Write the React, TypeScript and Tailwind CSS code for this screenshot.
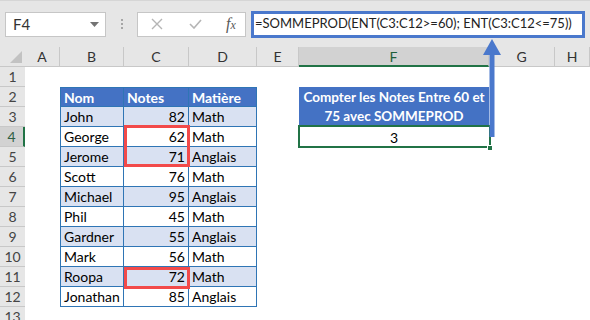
import React from "react";

const rows = [
  ["John", "82", "Math"],
  ["George", "62", "Math"],
  ["Jerome", "71", "Anglais"],
  ["Scott", "76", "Math"],
  ["Michael", "95", "Anglais"],
  ["Phil", "45", "Math"],
  ["Gardner", "55", "Anglais"],
  ["Mark", "56", "Math"],
  ["Roopa", "72", "Math"],
  ["Jonathan", "85", "Anglais"],
];

const letters = ["A", "B", "C", "D", "E", "F", "G", "H"];

function Toolbar() {
  return (
    <div className="h-[47px] bg-[#e6e6e6] border-t border-[#d6d6d6] flex items-center pl-[5px]">
      <div className="w-[101px] h-[25px] bg-white border border-[#c6c6c6] flex items-center justify-between pl-[7px] pr-[6px]">
        <span className="text-[15px] text-[#333]">F4</span>
        <svg width="9" height="5" viewBox="0 0 9 5">
          <path d="M0 0h9L4.5 5z" fill="#737373" />
        </svg>
      </div>
      <div className="w-[31px] flex flex-col items-center gap-[2px]">
        <span className="w-[2px] h-[2px] bg-[#a6a6a6]" />
        <span className="w-[2px] h-[2px] bg-[#a6a6a6]" />
        <span className="w-[2px] h-[2px] bg-[#a6a6a6]" />
      </div>
      <div className="w-[109px] h-[25px] bg-white border border-[#c6c6c6] flex items-center pl-[13px]">
        <svg width="12" height="12" viewBox="0 0 12 12">
          <path d="M1 1l10 10M11 1L1 11" stroke="#b5b5b5" strokeWidth="1.4" />
        </svg>
        <svg className="ml-[26px]" width="13" height="10" viewBox="0 0 13 10">
          <path d="M1 5l4 4L12 1" stroke="#b5b5b5" strokeWidth="1.6" fill="none" />
        </svg>
        <span className="ml-[24px] font-['Liberation_Serif'] italic text-[16px] text-[#595959] leading-none">
          f<span className="text-[12px]">x</span>
        </span>
      </div>
      <div className="ml-[5px] w-[334px] h-[27px] bg-white border-[3px] border-[#4a78cc] flex items-center pl-[1px]">
        <span className="text-[13px] text-[#222] whitespace-nowrap">
          =SOMMEPROD(ENT(C3:C12&gt;=60); ENT(C3:C12&lt;=75))
        </span>
      </div>
    </div>
  );
}

function Sheet() {
  const cells: React.ReactNode[] = [];

  cells.push(
    <div key="corner" className="bg-[#e6e6e6] border-b border-[#c8c8c8] relative">
      <svg className="absolute right-[3px] bottom-[3px]" width="12" height="12" viewBox="0 0 12 12">
        <path d="M12 0v12H0z" fill="#c2c2c2" />
      </svg>
    </div>
  );
  letters.forEach((l) => {
    const sel = l === "F";
    cells.push(
      <div
        key={"h" + l}
        className={
          sel
            ? "bg-[#d2d2d2] border-b-2 border-[#217346] border-r border-r-[#c8c8c8] flex items-center justify-center text-[14px] text-[#1e5e3a]"
            : "bg-[#e6e6e6] border-b border-r border-[#c8c8c8] flex items-center justify-center text-[14px] text-[#333]"
        }
      >
        {l}
      </div>
    );
  });

  for (let r = 1; r <= 13; r++) {
    const sel = r === 4;
    cells.push(
      <div
        key={"r" + r}
        className={
          sel
            ? "bg-[#d2d2d2] border-r-2 border-[#217346] border-b border-b-[#c8c8c8] flex items-center justify-center text-[14px] text-[#2f5e44]"
            : "bg-[#e6e6e6] border-b border-[#c8c8c8] flex items-center justify-center text-[14px] text-[#444]"
        }
      >
        {r}
      </div>
    );
    cells.push(<div key={"a" + r} />);

    if (r === 2) {
      cells.push(
        <div key="b2" className="bg-[#4472c4] border border-[#2f75b5] flex items-center pl-[3px] text-[14px] font-bold text-white">
          Nom
        </div>,
        <div key="c2" className="bg-[#4472c4] border-y border-r border-[#2f75b5] flex items-center pl-[3px] text-[14px] font-bold text-white">
          Notes
        </div>,
        <div key="d2" className="bg-[#4472c4] border-y border-r border-[#2f75b5] flex items-center pl-[3px] text-[14px] font-bold text-white">
          Matière
        </div>
      );
    } else if (r >= 3 && r <= 12) {
      const [nom, note, mat] = rows[r - 3];
      const band = r % 2 === 1 ? "bg-[#d9e1f2]" : "bg-white";
      cells.push(
        <div key={"b" + r} className={`${band} border-l border-r border-b border-[#2f75b5] flex items-center pl-[3px] text-[14px] text-black`}>
          {nom}
        </div>,
        <div key={"c" + r} className={`${band} border-r border-b border-[#2f75b5] flex items-center justify-end pr-[3px] text-[14px] text-black`}>
          {note}
        </div>,
        <div key={"d" + r} className={`${band} border-r border-b border-[#2f75b5] flex items-center pl-[3px] text-[14px] text-black`}>
          {mat}
        </div>
      );
    } else {
      cells.push(<div key={"b" + r} />, <div key={"c" + r} />, <div key={"d" + r} />);
    }

    cells.push(<div key={"e" + r} />);

    if (r === 2) {
      cells.push(
        <div key="f2" className="row-span-2 bg-[#4472c4] flex flex-col items-center justify-center text-[13.5px] font-bold text-white leading-[19px] whitespace-nowrap">
          <span>Compter les Notes Entre 60 et</span>
          <span>75 avec SOMMEPROD</span>
        </div>
      );
    } else if (r === 4) {
      cells.push(
        <div key="f4" className="relative flex items-center justify-center text-[14px] text-black">
          3
          <div className="absolute -left-[1px] -top-[2px] -right-[2px] -bottom-[1px] border-2 border-[#217346]" />
          <div className="absolute -right-[4px] -bottom-[4px] w-[6px] h-[6px] bg-[#217346] border border-white" />
        </div>
      );
    } else if (r !== 3) {
      cells.push(<div key={"f" + r} />);
    }

    cells.push(<div key={"g" + r} />, <div key={"hh" + r} />);
  }

  return (
    <div className="relative">
      <div className="grid grid-cols-[25px_35px_64px_65px_68px_42px_190px_66px_35px] auto-rows-[20px]">
        {cells}
      </div>
      <div className="absolute left-[124px] top-[78px] w-[66px] h-[42px] border-[3px] border-[#f24a4a]" />
      <div className="absolute left-[124px] top-[220px] w-[66px] h-[22px] border-[3px] border-[#f24a4a]" />
    </div>
  );
}

export default function App() {
  return (
    <div className="w-[590px] h-[320px] overflow-hidden bg-white relative font-['Lato',sans-serif]">
      <Toolbar />
      <Sheet />
      <svg className="absolute left-[483px] top-[39px]" width="18" height="98" viewBox="0 0 18 98">
        <path d="M9 0L18 16H0z" fill="#4a78cc" />
        <rect x="6.5" y="15" width="5" height="83" fill="#4a78cc" />
      </svg>
    </div>
  );
}
